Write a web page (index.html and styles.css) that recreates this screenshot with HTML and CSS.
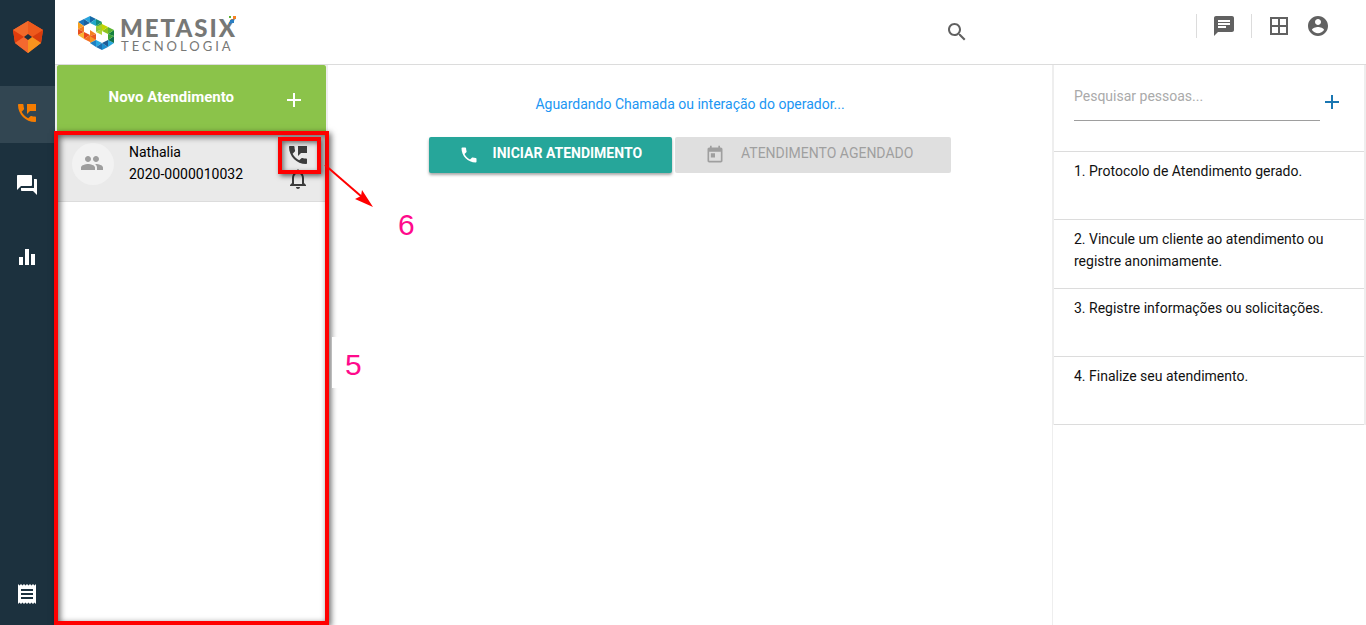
FILE: index.html
```html
<!DOCTYPE html>
<html lang="pt-BR">
<head>
	<meta charset="UTF-8">
	<title>Metasix Tecnologia - Atendimento</title>
	<link rel="stylesheet" href="styles.css">
</head>
<body>
	<!-- icons used more than once -->
	<svg class="defs" aria-hidden="true">
		<symbol id="phone-msg" viewBox="0 0 24 24"><path d="M20 15.5c-1.25 0-2.45-.2-3.57-.57-.35-.11-.74-.03-1.02.24l-2.2 2.2c-2.83-1.44-5.15-3.75-6.59-6.58l2.2-2.21c.28-.27.36-.66.25-1.01C8.7 6.45 8.5 5.25 8.5 4c0-.55-.45-1-1-1H4c-.55 0-1 .45-1 1 0 9.39 7.61 17 17 17 .55 0 1-.45 1-1v-3.5c0-.55-.45-1-1-1zM12 3v10l3-3h6V3h-9z"/></symbol>
		<symbol id="add" viewBox="0 0 24 24"><path d="M19 13h-6v6h-2v-6H5v-2h6V5h2v6h6v2z"/></symbol>
	</svg>

	<nav class="sidebar">
		<a class="brand" href="#" aria-label="Início">
			<svg width="30" height="32" viewBox="0 0 30 32">
				<path fill="#f15a24" d="M15 0 30 9 28 22 15 32 2 22 0 9z"/>
				<path fill="#f26a2a" d="M15 0 0 9 11 16 15 13z"/>
				<path fill="#ee5a1c" d="M15 0 30 9 19 16 15 13z"/>
				<path fill="#e03c0c" d="M0 9 11 16 2 22z"/>
				<path fill="#d93c0c" d="M30 9 19 16 28 22z"/>
				<path fill="#f4692f" d="M2 22 11 16 15 19v13z"/>
				<path fill="#f7931e" d="M28 22 19 16 15 19v13z"/>
				<path fill="#1c313e" d="M11 16 15 13 19 16 15 19z"/>
			</svg>
		</a>
		<a class="nav-item active" href="#" aria-label="Atendimento"><svg class="icon"><use href="#phone-msg"/></svg></a>
		<a class="nav-item" href="#" aria-label="Conversas"><svg class="icon" viewBox="0 0 24 24"><path d="M21 6h-2v9H6v2c0 .55.45 1 1 1h11l4 4V7c0-.55-.45-1-1-1zm-4 6V3c0-.55-.45-1-1-1H3c-.55 0-1 .45-1 1v14l4-4h10c.55 0 1-.45 1-1z"/></svg></a>
		<a class="nav-item" href="#" aria-label="Relatórios"><svg class="icon" viewBox="0 0 24 24"><path d="M10 20h4V4h-4v16zm-6 0h4v-8H4v8zM16 9v11h4V9h-4z"/></svg></a>
		<a class="nav-item last" href="#" aria-label="Registros"><svg class="icon" viewBox="0 0 24 24"><path d="M18 17H6v-2h12v2zm0-4H6v-2h12v2zm0-4H6V7h12v2zM3 22l1.500-1.500L6 22l1.500-1.500L9 22l1.500-1.500L12 22l1.500-1.500L15 22l1.500-1.500L18 22l1.500-1.500L21 22V2l-1.500 1.500L18 2l-1.500 1.500L15 2l-1.500 1.500L12 2l-1.500 1.500L9 2 7.500 3.500 6 2 4.500 3.500 3 2v20z"/></svg></a>
	</nav>

	<div class="page">
		<header class="topbar">
			<a class="logo" href="#">
				<svg width="36" height="36" viewBox="0 0 36 36">
					<!-- left ring -->
					<path fill="#1b75bc" d="M0 7 6 4 6 11z"/><path fill="#1c5f9c" d="M6 4 12 8 6 11z"/><path fill="#29a3dc" d="M6 4 12 1 12 8z"/>
					<path fill="#1469a8" d="M12 1 18 4 12 8z"/><path fill="#22a7c9" d="M18 4 18 11 12 8z"/><path fill="#138a7c" d="M18 4 24 7 18 11z"/>
					<path fill="#3aa648" d="M24 7 24 14 18 11z"/><path fill="#8cc63f" d="M24 14 18 17 18 11z"/><path fill="#b4d335" d="M24 14 24 20 18 17z"/>
					<path fill="#f7a01d" d="M0 7 6 11 0 14z"/><path fill="#ef7d22" d="M0 14 6 11 6 17z"/><path fill="#e8501f" d="M0 14 6 17 0 20z"/>
					<path fill="#f9b233" d="M0 20 6 17 6 24z"/><path fill="#e9481c" d="M6 17 12 20 6 24z"/><path fill="#f36f21" d="M6 24 12 20 12 27z"/>
					<path fill="#ee4f1f" d="M12 27 12 20 18 24z"/>
					<!-- right ring -->
					<path fill="#f58220" d="M12 15 18 19 12 21z"/><path fill="#ea5a1f" d="M12 21 18 19 18 25z"/><path fill="#f79421" d="M12 21 18 25 12 28z"/>
					<path fill="#1f7fc1" d="M12 28 18 25 18 32z"/><path fill="#27a9e1" d="M18 25 24 28 18 32z"/><path fill="#1c6fb0" d="M18 32 24 28 24 35z"/>
					<path fill="#1b8fd0" d="M24 28 30 32 24 35z"/><path fill="#1d5c95" d="M24 28 30 25 30 32z"/><path fill="#28a8df" d="M30 25 36 28 30 32z"/>
					<path fill="#12704a" d="M30 25 36 21 36 28z"/><path fill="#3fa535" d="M30 19 36 21 30 25z"/><path fill="#15803c" d="M36 15 36 21 30 19z"/>
					<path fill="#5cb531" d="M30 12 36 15 30 19z"/><path fill="#8fc31f" d="M30 12 30 19 24 16z"/><path fill="#c3d500" d="M24 9 30 12 24 16z"/>
					<path fill="#a8cd2c" d="M24 9 24 16 18 12z"/>
				</svg>
				<span class="logo-text">
					<span class="logo-name">METASIX</span>
					<span class="logo-sub">TECNOLOGIA</span>
				</span>
				<svg class="logo-dots" width="8" height="10" viewBox="0 0 8 10">
					<path fill="#2a7fc4" d="M1 5h4v3H1zM0 7h2v2H0z"/>
					<path fill="#5cb531" d="M0 1h2v2H0z"/>
					<path fill="#f58220" d="M4 1h3v3H4z"/>
				</svg>
			</a>
			<button class="icon-btn search" type="button" aria-label="Buscar"><svg class="icon" viewBox="0 0 24 24"><path d="M15.500 14h-.79l-.28-.27C15.410 12.590 16 11.110 16 9.500 16 5.910 13.090 3 9.500 3S3 5.910 3 9.500 5.910 16 9.500 16c1.610 0 3.090-.59 4.230-1.570l.27.28v.79l5 4.990L20.490 19l-4.990-5zm-6 0C7.010 14 5 11.990 5 9.500S7.010 5 9.500 5 14 7.010 14 9.500 11.990 14 9.500 14z"/></svg></button>
			<div class="tools">
				<span class="sep"></span>
				<button class="icon-btn" type="button" aria-label="Mensagens"><svg class="icon" viewBox="0 0 24 24"><path d="M20 2H4c-1.100 0-1.990.9-1.990 2L2 22l4-4h14c1.100 0 2-.9 2-2V4c0-1.100-.9-2-2-2zM6 9h12v2H6V9zm8 5H6v-2h8v2zm4-6H6V6h12v2z"/></svg></button>
				<span class="sep"></span>
				<button class="icon-btn" type="button" aria-label="Aplicativos"><svg class="icon" viewBox="0 0 24 24"><path d="M3 3v18h18V3H3zm8 16H5v-6h6v6zm0-8H5V5h6v6zm8 8h-6v-6h6v6zm0-8h-6V5h6v6z"/></svg></button>
				<button class="icon-btn" type="button" aria-label="Conta"><svg class="icon" viewBox="0 0 24 24"><path d="M12 2C6.480 2 2 6.480 2 12s4.480 10 10 10 10-4.480 10-10S17.520 2 12 2zm0 3c1.660 0 3 1.340 3 3s-1.340 3-3 3-3-1.340-3-3 1.340-3 3-3zm0 14.200c-2.500 0-4.710-1.280-6-3.220.03-1.990 4-3.080 6-3.080 1.990 0 5.970 1.090 6 3.080-1.290 1.940-3.500 3.220-6 3.220z"/></svg></button>
			</div>
		</header>

		<div class="content">
			<section class="queue">
				<button class="new-call" type="button">
					<span>Novo Atendimento</span>
					<svg class="icon"><use href="#add"/></svg>
				</button>
				<div class="queue-list">
					<article class="call">
						<div class="avatar"><svg class="icon" viewBox="0 0 24 24"><path d="M16 11c1.660 0 2.990-1.340 2.990-3S17.660 5 16 5s-3 1.340-3 3 1.340 3 3 3zm-8 0c1.660 0 2.990-1.340 2.990-3S9.660 5 8 5 5 6.340 5 8s1.340 3 3 3zm0 2c-2.330 0-7 1.170-7 3.500V19h14v-2.500c0-2.330-4.670-3.500-7-3.500zm8 0c-.29 0-.62.02-.97.05 1.160.84 1.970 1.970 1.970 3.450V19h6v-2.500c0-2.330-4.670-3.500-7-3.500z"/></svg></div>
						<div class="call-info">
							<div>Nathalia</div>
							<div>2020-0000010032</div>
						</div>
						<div class="call-actions">
							<button class="icon-btn" type="button" aria-label="Atender"><svg class="icon"><use href="#phone-msg"/></svg></button>
							<button class="icon-btn" type="button" aria-label="Notificar"><svg class="icon" viewBox="0 0 24 24"><path d="M12 22c1.100 0 2-.9 2-2h-4c0 1.100.9 2 2 2zm6-6v-5c0-3.070-1.630-5.640-4.500-6.320V4c0-.83-.67-1.500-1.500-1.500s-1.500.67-1.500 1.500v.68C7.640 5.360 6 7.920 6 11v5l-2 2v1h16v-1l-2-2zm-2 1H8v-6c0-2.480 1.510-4.500 4-4.500s4 2.020 4 4.500v6z"/></svg></button>
						</div>
					</article>
					<!-- numbered callouts over the list -->
					<div class="mark mark-list"></div>
					<div class="mark mark-call"></div>
					<svg class="arrow" width="50" height="44" viewBox="0 0 50 44">
						<path stroke="#f00" stroke-width="2" d="M1 1 38 33"/>
						<path fill="#f00" d="M49 43 31 35 37 32 38 26z"/>
					</svg>
					<span class="number number-5">5</span>
					<span class="number number-6">6</span>
				</div>
			</section>

			<main class="workspace">
				<p class="status">Aguardando Chamada ou interação do operador...</p>
				<div class="actions">
					<button class="btn btn-start" type="button">
						<svg class="icon" viewBox="0 0 24 24"><path d="M6.620 10.790c1.440 2.830 3.760 5.140 6.590 6.590l2.200-2.200c.27-.27.67-.36 1.020-.24 1.120.37 2.330.57 3.570.57.55 0 1 .45 1 1V20c0 .55-.45 1-1 1-9.390 0-17-7.610-17-17 0-.55.45-1 1-1h3.500c.55 0 1 .45 1 1 0 1.250.2 2.450.57 3.570.11.35.03.74-.25 1.020l-2.200 2.200z"/></svg>
						<span>INICIAR ATENDIMENTO</span>
					</button>
					<button class="btn btn-scheduled" type="button" disabled>
						<svg class="icon" viewBox="0 0 24 24"><path d="M19 3h-1V1h-2v2H8V1H6v2H5c-1.110 0-1.990.9-1.990 2L3 19c0 1.100.89 2 2 2h14c1.100 0 2-.9 2-2V5c0-1.100-.9-2-2-2zm0 16H5V8h14v11zM7 10h5v5H7z"/></svg>
						<span>ATENDIMENTO AGENDADO</span>
					</button>
				</div>
			</main>

			<aside class="people">
				<div class="people-card">
					<div class="people-search">
						<input type="text" placeholder="Pesquisar pessoas..." aria-label="Pesquisar pessoas">
						<button class="icon-btn add" type="button" aria-label="Adicionar pessoa"><svg class="icon"><use href="#add"/></svg></button>
					</div>
					<div class="step">1. Protocolo de Atendimento gerado.</div>
					<div class="step">2. Vincule um cliente ao atendimento ou registre anonimamente.</div>
					<div class="step">3. Registre informações ou solicitações.</div>
					<div class="step">4. Finalize seu atendimento.</div>
				</div>
			</aside>
		</div>
	</div>
</body>
</html>
```
FILE: styles.css
```css
* { box-sizing: border-box; }

body {
	display: flex;
	min-height: 100vh;
	margin: 0;
	background: #fff;
	color: #111;
	font: 14px/22px Roboto, "Liberation Sans", sans-serif;
}
button, input { font: inherit; }
button { padding: 0; border: 0; background: none; cursor: pointer; }
svg { display: block; }

.defs { position: absolute; width: 0; height: 0; }
.icon { width: 24px; height: 24px; fill: currentColor; flex: none; }
.icon-btn { display: block; color: #616161; }

/* sidebar */
.sidebar {
	display: flex;
	flex-direction: column;
	gap: 15px;
	width: 55px;
	flex: none;
	padding-bottom: 1px;
	background: #1c313e;
}
.brand { display: flex; justify-content: center; height: 71px; padding-top: 21px; }
.nav-item { display: flex; height: 57px; padding: 15px 0 0 15px; color: #fff; }
.nav-item.active { background: #324652; color: #f57c00; }
.nav-item.last { margin-top: auto; }

.page { display: flex; flex-direction: column; flex: 1; min-width: 0; }

/* top bar */
.topbar {
	display: grid;
	grid-template-columns: auto 1fr 397px;
	height: 65px;
	padding-left: 23px;
	border-bottom: 1px solid #dcdcdc;
}
.logo { display: flex; position: relative; padding-top: 15px; color: #777876; text-decoration: none; }
.logo-text { display: flex; flex-direction: column; padding: 2px 0 0 6px; font-family: Lato, sans-serif; }
.logo-name { font-size: 24px; font-weight: 900; line-height: 22px; letter-spacing: 2px; }
.logo-sub { padding-left: 1px; font-size: 13px; line-height: 14px; letter-spacing: 3px; }
.logo-dots { position: absolute; top: 15px; right: 0; }
.search { justify-self: end; align-self: start; margin-top: 20px; }
.tools { display: flex; align-items: flex-start; justify-content: flex-end; gap: 15px; padding: 14px 36px 0 0; }
.sep { width: 1px; height: 24px; background: #dcdcdc; }

.content { display: flex; flex: 1; }

/* queue */
.queue {
	display: flex;
	flex-direction: column;
	width: 273px;
	flex: none;
	border: solid #eee;
	border-width: 0 2px;
}
.new-call {
	display: flex;
	justify-content: flex-end;
	gap: 48px;
	height: 66px;
	padding: 21px 20px 0 0;
	border-radius: 2px 2px 0 0;
	background: #8bc34a;
	color: #fff;
	font-size: 15px;
	font-weight: 700;
}
.new-call .icon { margin-top: 2px; }
.queue-list { position: relative; flex: 1; }
.call {
	display: flex;
	height: 71px;
	padding: 10px 16px 0 15px;
	border-bottom: 1px solid #dcdcdc;
	background: #eaeaea;
	color: #000;
}
.avatar {
	display: flex;
	width: 42px;
	height: 42px;
	margin-top: 2px;
	padding: 8px 0 0 8px;
	border-radius: 50%;
	background: #f2f2f2;
	color: #9e9e9e;
}
.call-info { flex: 1; padding-left: 15px; }
.call-actions { padding-top: 2px; }
.call-actions .icon-btn { color: #3c3c3c; }

/* callouts */
.mark { position: absolute; border: 4px solid #f00; pointer-events: none; }
.mark-list {
	inset: 0 -3px 0 -3px;
	box-shadow: 2px 2px 6px rgba(0, 0, 0, .6), inset 2px 2px 6px rgba(0, 0, 0, .6);
}
.mark-call {
	top: 6px;
	right: 5px;
	width: 43px;
	height: 37px;
	box-shadow: 2px 2px 5px rgba(0, 0, 0, .6), inset 2px 2px 5px rgba(0, 0, 0, .5);
}
.arrow { position: absolute; top: 33px; left: 267px; }
.number { position: absolute; color: #ff0a8c; font: 30px/34px "Liberation Sans", Arial, sans-serif; }
.number-5 { top: 206px; left: 275px; width: 40px; padding: 11px 13px 6px; background: #fff; }
.number-6 { top: 77px; left: 341px; }

/* workspace */
.workspace { flex: 1; padding-top: 28px; }
.status { margin: 0 0 22px; color: #2196f3; text-align: center; }
.actions { display: flex; justify-content: center; gap: 3px; }
.btn {
	display: flex;
	gap: 10px;
	height: 36px;
	padding: 5px 30px 0 28px;
	border-radius: 2px;
}
.btn .icon { width: 20px; height: 20px; margin: 3px 4px 0 2px; }
.btn-start {
	background: #26a69a;
	box-shadow: 0 2px 3px rgba(0, 0, 0, .35);
	color: #fff;
	font-weight: 700;
}
.btn-scheduled { gap: 12px; padding-right: 38px; background: #dfdfdf; color: #9f9f9f; }

/* people */
.people { width: 314px; flex: none; border-left: 1px solid #eee; }
.people-card { border: solid #eee; border-width: 0 2px 0 1px; }
.people-search {
	display: flex;
	align-items: flex-start;
	height: 87px;
	padding: 10px 20px 0;
	border-bottom: 1px solid #dcdcdc;
}
.people-search input {
	flex: 1;
	min-width: 0;
	height: 46px;
	padding: 0 0 4px;
	border: 0;
	border-bottom: 1px solid #9e9e9e;
	outline: 0;
	background: none;
}
.people-search input::placeholder { color: #aaa; opacity: 1; }
.add { margin: 15px 0 0; color: #1976b2; }
.step { min-height: 68px; padding: 8px 20px 16px; border-bottom: 1px solid #dcdcdc; }
```
